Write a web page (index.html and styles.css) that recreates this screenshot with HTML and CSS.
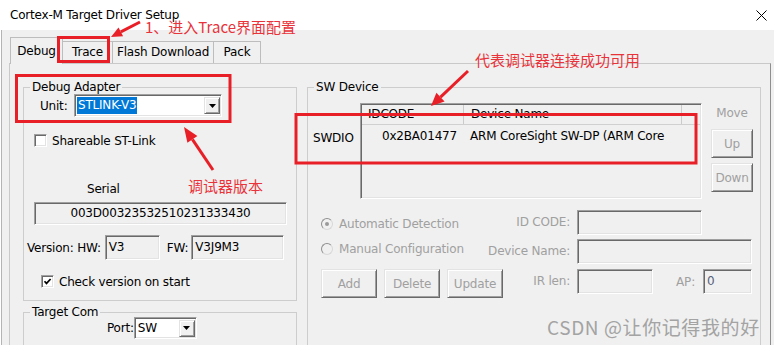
FILE: index.html
```html
<!DOCTYPE html>
<html lang="zh">
<head>
    <meta charset="UTF-8">
    <title>Cortex-M Target Driver Setup</title>
    <link rel="stylesheet" href="styles.css">
</head>
<body>
    <div class="window">
        <div class="titlebar">
            <span class="title">Cortex-M Target Driver Setup</span>
            <svg class="close" width="11" height="11" viewBox="0 0 11 11"><path d="M0.5 0.5L10.5 10.5M10.5 0.5L0.5 10.5" stroke="#000" stroke-width="1"/></svg>
        </div>
        <div class="client">
            <div class="tabs">
                <div class="tab active tab-debug">Debug</div>
                <div class="tab tab-trace">Trace</div>
                <div class="tab tab-flash">Flash Download</div>
                <div class="tab tab-pack">Pack</div>
            </div>
            <div class="tabpage">
                <div class="left-col">
                    <fieldset class="group adapter">
                        <legend>Debug Adapter</legend>
                        <div class="unit-row">
                            <span class="unit-label">Unit:</span>
                            <div class="combo sunken unit-combo">
                                <span class="selected">STLINK-V3</span>
                                <span class="drop-btn raised"><svg width="7" height="4" viewBox="0 0 7 4"><path d="M0 0H7L3.5 4Z" fill="#000"/></svg></span>
                            </div>
                        </div>
                        <div class="check-row share-row">
                            <span class="checkbox sunken"></span>
                            <span>Shareable ST-Link</span>
                        </div>
                        <div class="serial-label">Serial</div>
                        <div class="field sunken serial-field">003D00323532510231333430</div>
                        <div class="version-row">
                            <span>Version: HW:</span>
                            <div class="field sunken hw-field">V3</div>
                            <span class="fw-label">FW:</span>
                            <div class="field sunken fw-field">V3J9M3</div>
                        </div>
                        <div class="check-row verify-row">
                            <span class="checkbox sunken"><svg width="11" height="11" viewBox="0 0 11 11"><path d="M2.5 5.2L4.5 7.4L8.6 3" fill="none" stroke="#000" stroke-width="1.7"/></svg></span>
                            <span>Check version on start</span>
                        </div>
                    </fieldset>
                    <fieldset class="group target">
                        <legend>Target Com</legend>
                        <div class="port-row">
                            <span>Port:</span>
                            <div class="combo sunken port-combo">
                                <span class="combo-text">SW</span>
                                <span class="drop-btn raised"><svg width="7" height="4" viewBox="0 0 7 4"><path d="M0 0H7L3.5 4Z" fill="#000"/></svg></span>
                            </div>
                        </div>
                    </fieldset>
                </div>
                <fieldset class="group swdev">
                    <legend>SW Device</legend>
                    <div class="dev-top">
                        <div class="swdio">SWDIO</div>
                        <div class="listview sunken">
                            <div class="lv-head">
                                <span class="lv-col1">IDCODE</span>
                                <span class="lv-col2">Device Name</span>
                            </div>
                            <div class="lv-row">
                                <span class="lv-col1">0x2BA01477</span>
                                <span class="lv-col2">ARM CoreSight SW-DP (ARM Core</span>
                            </div>
                        </div>
                        <div class="move-col">
                            <div class="move-label">Move</div>
                            <div class="btn raised up-btn">Up</div>
                            <div class="btn raised down-btn">Down</div>
                        </div>
                    </div>
                    <div class="dev-form">
                        <div class="radio-item r1"><span class="radio on"></span>Automatic Detection</div>
                        <div class="form-label">ID CODE:</div>
                        <div class="field sunken idcode-field"></div>
                        <div class="radio-item r2"><span class="radio"></span>Manual Configuration</div>
                        <div class="form-label">Device Name:</div>
                        <div class="field sunken name-field"></div>
                        <div class="btn-row">
                            <div class="btn raised">Add</div>
                            <div class="btn raised">Delete</div>
                            <div class="btn raised">Update</div>
                        </div>
                        <div class="form-label ir-label">IR len:</div>
                        <div class="ir-row">
                            <div class="field sunken ir-field"></div>
                            <span class="ap-label">AP:</span>
                            <div class="field sunken ap-field">0</div>
                        </div>
                    </div>
                </fieldset>
            </div>
        </div>

        <!-- 标注层 -->
        <svg class="marks" width="774" height="345" viewBox="0 0 774 345">
            <g fill="none" stroke="#e81f27" stroke-width="3">
                <rect x="58.5" y="37.5" width="50" height="24"/>
                <rect x="16.5" y="75.5" width="213.5" height="46"/>
                <rect x="296" y="114.5" width="400" height="48.5"/>
                <path d="M140 22L120.8 31.9"/>
                <path d="M468 71L440.5 97.1"/>
                <path d="M213 170L192.4 139.4"/>
            </g>
            <g fill="#e81f27">
                <polygon points="111,37 123.1,36.3 118.5,27.5"/>
                <polygon points="431,106 444.6,101.5 436.4,92.7"/>
                <polygon points="184,127 197.4,136 187.4,142.8"/>
            </g>
        </svg>
        <span class="note note-trace">1、进入Trace界面配置</span>
        <span class="note note-link">代表调试器连接成功可用</span>
        <span class="note note-ver">调试器版本</span>
        <span class="watermark">CSDN @让你记得我的好</span>
    </div>
</body>
</html>
```

FILE: styles.css
```css
* {
    box-sizing: border-box;
}
html, body {
    margin: 0;
    padding: 0;
}
body {
    width: 774px;
    height: 345px;
    overflow: hidden;
    background: #fff;
    font-family: "DejaVu Sans", "Noto Sans CJK SC", sans-serif;
    font-size: 12px;
    letter-spacing: -0.2px;
    color: #000;
}
.window {
    position: relative;
    width: 774px;
    height: 345px;
    display: flex;
    flex-direction: column;
}
.titlebar {
    height: 30px;
    flex: none;
    display: flex;
    align-items: center;
    justify-content: space-between;
    padding: 0 7px 0 10px;
}
.title {
    line-height: 14px;
}
.close {
    display: block;
}
.client {
    flex: 1;
    display: flex;
    flex-direction: column;
    margin-left: 1px;
    border-left: 1px solid #b4b4b4;
    background: #f0f0f0;
    padding: 7px 3px 0 7px;
}

/* 选项卡 */
.tabs {
    flex: none;
    display: flex;
    align-items: flex-end;
    height: 27px;
    margin-bottom: -1px;
    padding-left: 1px;
    position: relative;
    z-index: 1;
}
.tab {
    height: 22px;
    margin-bottom: 1px;
    margin-left: -1px;
    border: 1px solid #bdbdbd;
    border-bottom: none;
    background: #f0f0f0;
    text-align: center;
    line-height: 20px;
}
.tab.active {
    height: 27px;
    margin-bottom: 0;
    margin-left: 0;
    padding-top: 3px;
    position: relative;
    z-index: 1;
}
.tab-debug { width: 53px; }
.tab-trace { width: 51px; }
.tab-flash { width: 102px; }
.tab-pack { width: 48px; }

.tabpage {
    flex: 1;
    display: flex;
    align-items: flex-start;
    gap: 10px;
    padding: 16px 0 0 13px;
    border: 1px solid #c9c9c9;
    border-right-color: #8e8e8e;
}

/* 分组框 */
.group {
    margin: 0;
    padding: 0;
    min-width: 0;
    border: 1px solid #cdcdcd;
}
.group legend {
    padding: 0 2px;
    margin-left: 6px;
    line-height: 14px;
}
.left-col {
    width: 274px;
    flex: none;
}
.sunken {
    border: 1px solid;
    border-color: #a0a0a0 #fff #fff #a0a0a0;
    box-shadow: inset 1px 1px #696969, inset -1px -1px #e3e3e3;
}
.raised {
    border: 1px solid;
    border-color: #e3e3e3 #696969 #696969 #e3e3e3;
    box-shadow: inset 1px 1px #fff, inset -1px -1px #a0a0a0;
    background: #f0f0f0;
}
.field {
    background: #f0f0f0;
    display: flex;
    align-items: center;
    padding: 0 3px 1px;
    white-space: nowrap;
}

.adapter {
    padding-bottom: 12px;
}
.unit-row {
    display: flex;
    align-items: center;
    height: 23px;
    padding-left: 16px;
}
.unit-label {
    width: 34px;
}
.combo {
    display: flex;
    align-items: center;
    justify-content: space-between;
    background: #fff;
    padding: 2px 1px 2px 2px;
}
.unit-combo {
    width: 148px;
    height: 23px;
}
.selected {
    display: block;
    background: #0078d7;
    color: #fff;
    line-height: 17px;
    padding: 0 1px;
}
.combo-text {
    padding-left: 1px;
}
.drop-btn {
    width: 16px;
    height: 17px;
    display: flex;
    align-items: center;
    justify-content: center;
}
.drop-btn svg {
    display: block;
}
.check-row {
    display: flex;
    align-items: center;
    gap: 5px;
    height: 13px;
}
.checkbox {
    width: 13px;
    height: 13px;
    flex: none;
    background: #fff;
    display: flex;
    align-items: center;
    justify-content: center;
}
.checkbox svg {
    display: block;
}
.share-row {
    margin-top: 17px;
    padding-left: 10px;
}
.serial-label {
    margin-top: 35px;
    padding-left: 63px;
    line-height: 14px;
}
.serial-field {
    width: 253px;
    height: 23px;
    margin: 6px 0 0 10px;
    justify-content: center;
    padding-bottom: 2px;
}
.version-row {
    display: flex;
    align-items: center;
    height: 25px;
    margin-top: 10px;
    padding-left: 3px;
}
.hw-field {
    width: 55px;
    height: 25px;
    margin-left: 4px;
}
.fw-label {
    margin-left: 7px;
}
.fw-field {
    width: 93px;
    height: 25px;
    margin-left: 3px;
}
.verify-row {
    margin-top: 15px;
    padding-left: 17px;
}

.target {
    margin-top: 4px;
    height: 60px;
}
.port-row {
    display: flex;
    align-items: center;
    margin-top: -2px;
    padding-left: 83px;
}
.port-combo {
    width: 63px;
    height: 22px;
    padding-top: 1px;
    padding-bottom: 1px;
}

/* SW Device */
.swdev {
    width: 454px;
    flex: none;
    height: 280px;
}
.dev-top {
    display: flex;
    margin-top: 9px;
}
.swdio {
    width: 52px;
    flex: none;
    padding-left: 5px;
    margin-top: 28px;
    line-height: 14px;
}
.listview {
    width: 342px;
    height: 96px;
    flex: none;
    padding: 1px;
    background: #f0f0f0;
}
.lv-head {
    display: flex;
    height: 20px;
    line-height: 19px;
    border-bottom: 1px solid #d0d0d0;
}
.lv-row {
    display: flex;
    height: 21px;
    line-height: 20px;
    padding-top: 1px;
    white-space: nowrap;
}
.lv-col1 {
    width: 102px;
    flex: none;
    padding-left: 6px;
}
.lv-col2 {
    width: 218px;
    flex: none;
    padding-left: 7px;
    overflow: hidden;
}
.lv-head .lv-col1,
.lv-head .lv-col2 {
    border-right: 1px solid #cbcbcb;
}
.lv-row .lv-col1 {
    padding-left: 20px;
}
.lv-row .lv-col2 {
    padding-left: 6px;
}
.move-col {
    width: 42px;
    margin-left: 9px;
    flex: none;
    display: flex;
    flex-direction: column;
    align-items: center;
}
.move-label {
    margin-top: 3px;
    line-height: 14px;
    color: #a0a0a0;
}
.btn {
    flex: none;
    display: flex;
    align-items: center;
    justify-content: center;
    color: #a0a0a0;
    height: 29px;
}
.move-col .btn {
    width: 42px;
}
.up-btn {
    margin-top: 9px;
}
.down-btn {
    margin-top: 5px;
}

.dev-form {
    display: grid;
    grid-template-columns: 164px 92px 175px;
    grid-template-rows: 25px 25px 30px;
    row-gap: 4px;
    margin-top: 11px;
    padding-left: 13px;
    color: #a0a0a0;
}
.radio-item {
    display: flex;
    align-items: center;
    gap: 6px;
    line-height: 14px;
    align-self: start;
    white-space: nowrap;
}
.r1 { margin-top: 7px; }
.r2 { margin-top: 3px; }
.radio {
    width: 12px;
    height: 12px;
    flex: none;
    border-radius: 50%;
    border: 1px solid;
    border-color: #8f8f8f #d8d8d8 #d8d8d8 #8f8f8f;
    background: #f0f0f0;
    display: flex;
    align-items: center;
    justify-content: center;
}
.radio.on::after {
    content: '';
    width: 4px;
    height: 4px;
    border-radius: 50%;
    background: #9a9a9a;
}
.form-label {
    text-align: right;
    padding-right: 7px;
    line-height: 25px;
    white-space: nowrap;
}
.idcode-field {
    width: 125px;
    height: 25px;
}
.name-field {
    width: 175px;
    height: 25px;
}
.btn-row {
    display: flex;
    gap: 7px;
    align-self: end;
}
.btn-row .btn {
    width: 56px;
}
.ir-label {
    align-self: start;
    margin-top: 1px;
}
.ir-row {
    display: flex;
    align-items: center;
    align-self: start;
    margin-top: 1px;
    height: 25px;
}
.ir-field {
    width: 76px;
    height: 25px;
}
.ap-label {
    margin-left: auto;
    margin-right: 8px;
}
.ap-field {
    width: 49px;
    height: 25px;
    color: #56607a;
    align-items: flex-start;
    padding-top: 4px;
}

/* 标注 */
.marks {
    position: absolute;
    left: 0;
    top: 0;
    z-index: 5;
    pointer-events: none;
}
.note {
    position: absolute;
    z-index: 5;
    font-family: "Noto Sans CJK SC", sans-serif;
    font-size: 15px;
    line-height: 15px;
    letter-spacing: 0;
    color: #e8333b;
    white-space: nowrap;
}
.note-trace { left: 145px; top: 19px; }
.note-link { left: 475px; top: 52px; }
.note-ver { left: 188px; top: 178px; }
.watermark {
    position: absolute;
    z-index: 5;
    left: 547px;
    top: 317px;
    font-family: "Noto Sans CJK SC", sans-serif;
    font-size: 19px;
    line-height: 19px;
    letter-spacing: 0.6px;
    color: #a3a3a3;
    white-space: nowrap;
}
```
